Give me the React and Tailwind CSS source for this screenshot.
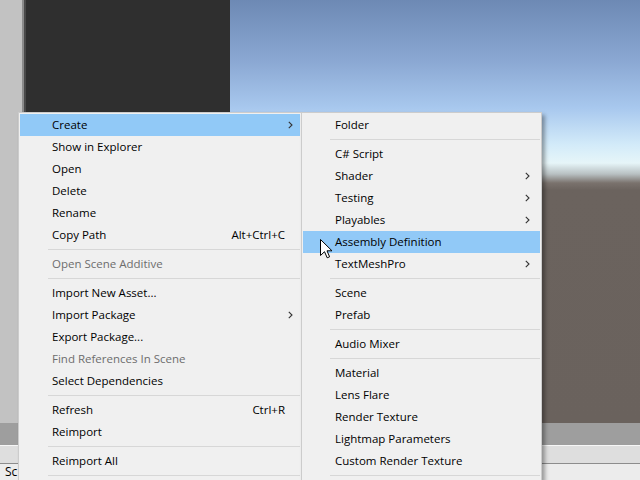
import React from "react";

const font = { fontFamily: '"Open Sans", "Noto Sans", sans-serif' };

function Chevron() {
  return (
    <svg width="5" height="8" viewBox="0 0 5 8" className="shrink-0">
      <path d="M0.8 0.8 L4 4 L0.8 7.2" fill="none" stroke="#333" strokeWidth="1.1" />
    </svg>
  );
}

function Item({ label, shortcut, arrow, disabled, active, sub }) {
  return (
    <div
      className={
        "flex h-[22px] items-center " +
        (active ? "bg-[#91c9f7] " : "") +
        (sub ? "pl-[32px] pr-[10px]" : "pl-[32px] pr-[7px]")
      }
    >
      <span className={"flex-1 whitespace-nowrap " + (disabled ? "text-[#6d6d6d]" : "text-black")}>
        {label}
      </span>
      {shortcut && <span className="mr-[8px] whitespace-nowrap text-black">{shortcut}</span>}
      {arrow && <Chevron />}
    </div>
  );
}

function Sep({ sub }) {
  return (
    <div className={"flex h-[7px] items-center " + (sub ? "pl-[27px]" : "pl-[28px]")}>
      <div className="h-px flex-1 bg-[#d7d7d7]" />
    </div>
  );
}

const mainItems = [
  { label: "Create", arrow: true, active: true },
  { label: "Show in Explorer" },
  { label: "Open" },
  { label: "Delete" },
  { label: "Rename" },
  { label: "Copy Path", shortcut: "Alt+Ctrl+C" },
  "sep",
  { label: "Open Scene Additive", disabled: true },
  "sep",
  { label: "Import New Asset..." },
  { label: "Import Package", arrow: true },
  { label: "Export Package..." },
  { label: "Find References In Scene", disabled: true },
  { label: "Select Dependencies" },
  "sep",
  { label: "Refresh", shortcut: "Ctrl+R" },
  { label: "Reimport" },
  "sep",
  { label: "Reimport All" },
  "sep",
];

const subItems = [
  { label: "Folder" },
  "sep",
  { label: "C# Script" },
  { label: "Shader", arrow: true },
  { label: "Testing", arrow: true },
  { label: "Playables", arrow: true },
  { label: "Assembly Definition", active: true },
  { label: "TextMeshPro", arrow: true },
  "sep",
  { label: "Scene" },
  { label: "Prefab" },
  "sep",
  { label: "Audio Mixer" },
  "sep",
  { label: "Material" },
  { label: "Lens Flare" },
  { label: "Render Texture" },
  { label: "Lightmap Parameters" },
  { label: "Custom Render Texture" },
  "sep",
];

export default function App() {
  return (
    <div className="relative h-[480px] w-[640px] overflow-hidden text-[11.5px]" style={font}>
      {/* background editor layout */}
      <div className="flex h-[423px]">
        <div className="w-[22px] bg-[#c2c2c2]" />
        <div className="w-[2px] bg-[#8c8c8c]" />
        <div className="w-[2px] bg-[#4a4a4a]" />
        <div className="w-[204px] bg-[#2f2f2f]" />
        <div className="flex-1 bg-[linear-gradient(to_bottom,#6d89b4_0px,#8aa7d2_60px,#a8c8ee_108px,#d3ebf9_145px,#e6f5f8_163px,#b8c0c2_174px,#7a726d_183px,#6b635e_190px,#6a625d_423px)]" />
      </div>
      <div className="h-[22px] bg-[#9e9e9e]" />
      <div className="h-px bg-[#f6f6f6]" />
      <div className="h-[17px] bg-[#dedede]" />
      <div className="h-px bg-[#8c8c8c]" />
      <div className="flex h-[16px] items-center bg-[#ececec] pl-[5px] text-[12px] text-black">Sc</div>

      {/* main context menu */}
      <div className="absolute left-[18px] top-[112px] w-[284px] border border-[#cccccc] bg-[#f0f0f0] p-px shadow-[2px_2px_3px_rgba(0,0,0,0.3)]">
        {mainItems.map((it, i) => (it === "sep" ? <Sep key={i} /> : <Item key={i} {...it} />))}
      </div>

      {/* submenu */}
      <div className="absolute left-[301px] top-[112px] w-[241px] border border-[#cccccc] bg-[#f0f0f0] p-px shadow-[3px_3px_4px_rgba(0,0,0,0.35)]">
        {subItems.map((it, i) => (it === "sep" ? <Sep key={i} sub /> : <Item key={i} sub {...it} />))}
      </div>

      {/* mouse cursor */}
      <svg className="absolute left-[320px] top-[239px]" width="13" height="20" viewBox="0 0 13 20">
        <path
          d="M0.5 0.5 L0.5 16.5 L4.5 12.7 L7.2 18.8 L9.6 17.8 L7 11.8 L12 11.8 Z"
          fill="#fff"
          stroke="#000"
          strokeWidth="1"
          strokeLinejoin="miter"
        />
      </svg>
    </div>
  );
}
